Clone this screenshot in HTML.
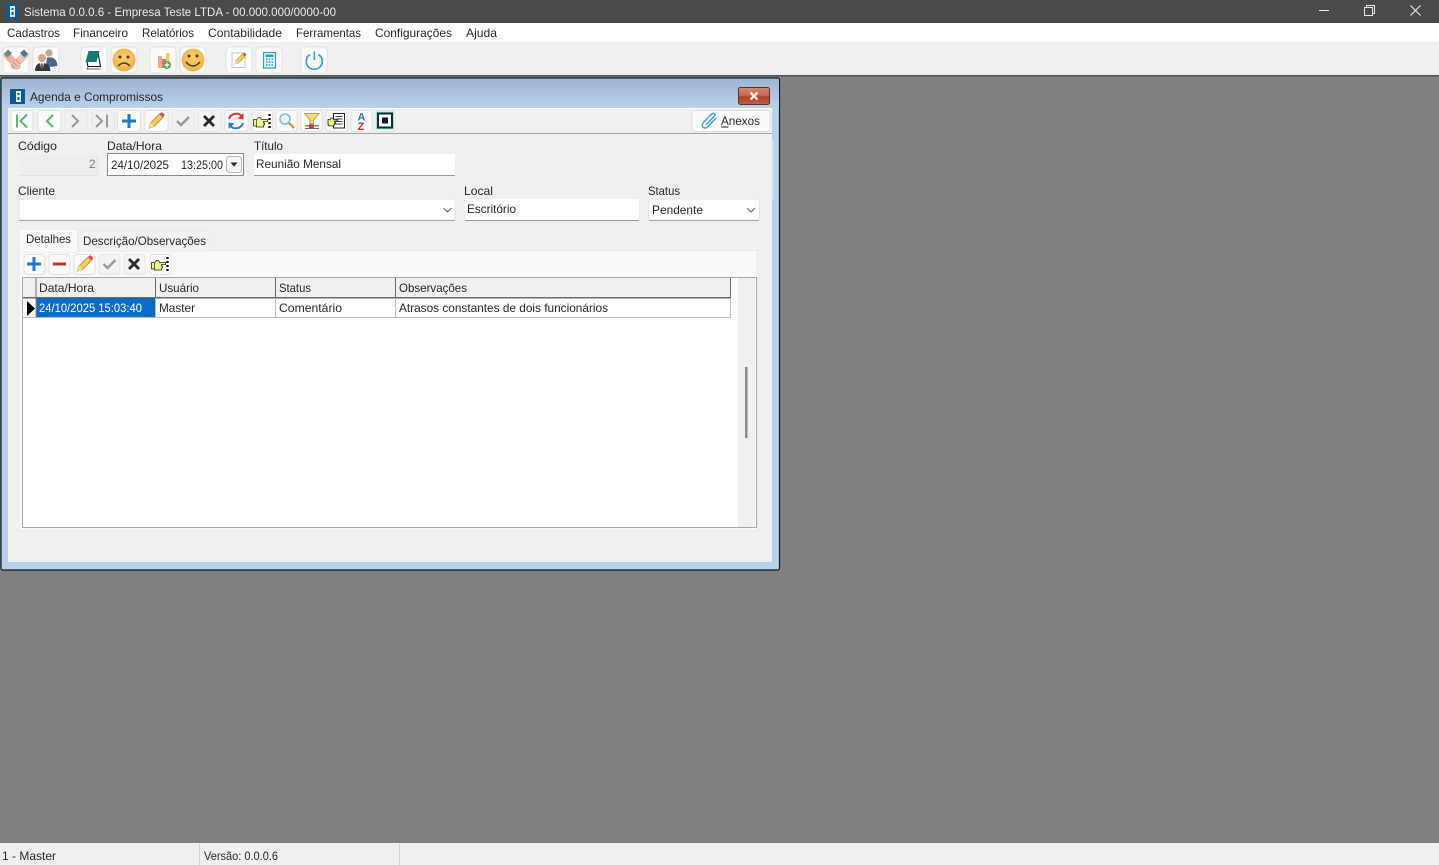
<!DOCTYPE html>
<html lang="pt-BR">
<head>
<meta charset="utf-8">
<title>Sistema 0.0.0.6</title>
<style>
html,body{margin:0;padding:0;width:1439px;height:865px;overflow:hidden;background:#808080}
svg{display:block;position:absolute;left:0;top:0}
text{font-family:"Liberation Sans",sans-serif;font-size:12px;fill:#262626;white-space:pre}
.b{fill:#fbfbfb;stroke:#e0e0e0}
</style>
</head>
<body>
<svg width="1439" height="865" viewBox="0 0 1439 865" xmlns="http://www.w3.org/2000/svg">
<defs>
<linearGradient id="tg" x1="0" y1="0" x2="0" y2="1"><stop offset="0" stop-color="#9db5d1"/><stop offset="1" stop-color="#b9d1ea"/></linearGradient>
<linearGradient id="cg" x1="0" y1="0" x2="0" y2="1"><stop offset="0" stop-color="#d98a78"/><stop offset=".5" stop-color="#c9614c"/><stop offset=".55" stop-color="#b23a22"/><stop offset="1" stop-color="#c4624c"/></linearGradient>
<radialGradient id="sm" cx=".5" cy=".4" r=".6"><stop offset="0" stop-color="#f8cf6c"/><stop offset="1" stop-color="#eeb04a"/></radialGradient>
<g id="pencil">
<path d="M-7 7 L-5.500 2 L3.500 -7 L7 -3.500 L-2 5.500 Z" fill="#f3cb5c" stroke="#b98a30" stroke-width=".8"/>
<path d="M3.500 -7 L5 -8.500 Q6 -9 7 -8 L8.300 -6.800 Q9 -6 8.300 -5 L7 -3.500 Z" fill="#d9534f"/>
<path d="M-7 7 L-5.500 2 L-2 5.500 Z" fill="#f3e0b8"/>
</g>
<path id="plus" d="M-7 0H7M0 -7V7" stroke="#2277cc" stroke-width="3" fill="none"/>
<path id="check" d="M-6 0 L-2 4 L6 -4" stroke="#9a9a9a" stroke-width="2.500" fill="none"/>
<path id="xx" d="M-5 -5 L5 5 M5 -5 L-5 5" stroke="#2a2a2a" stroke-width="2.800" fill="none"/>
<g id="hand">
<path d="M-8.500 -2.500 H-5.500 L-3.500 -4.500 H-1.500 L-.5 -2.500 H5.500 V-.5 H1.500 V1 H2.500 V3 H1.500 V5 H-5.500 V4 H-8.500 Z" fill="#f0f488" stroke="#2a2a2a" stroke-width=".8"/>
<path d="M-5.500 -2V4" stroke="#2a2a2a" stroke-width=".7"/>
<path d="M7.500 -8V-6M7.500 -4V-2M7.500 0V2M7.500 4V6" stroke="#111" stroke-width="2.400"/>
</g>
</defs>

<!-- title bar -->
<rect width="1439" height="23" fill="#4b4a48"/>
<rect x="6" y="3" width="12" height="17" fill="#0e5a8c"/>
<rect x="10" y="6" width="5" height="11" fill="#dfeaf2"/>
<rect x="11.500" y="8" width="2" height="2" fill="#0e5a8c"/><rect x="11.500" y="12" width="2" height="3" fill="#0e5a8c"/>
<text x="24" y="16" textLength="312" lengthAdjust="spacingAndGlyphs" style="fill:#ececec">Sistema 0.0.0.6 - Empresa Teste LTDA - 00.000.000/0000-00</text>
<path d="M1319 10.500H1329" stroke="#eee" stroke-width="1"/>
<path d="M1364.500 7.500h8v8h-8z M1366.500 7.500v-2h8v8h-2" stroke="#eee" fill="none"/>
<path d="M1410.500 5.500 L1420.500 15.500 M1420.500 5.500 L1410.500 15.500" stroke="#eee" stroke-width="1.100"/>

<!-- menu -->
<rect y="23" width="1439" height="20" fill="#fff"/>
<g>
<text x="7" y="37" textLength="53" lengthAdjust="spacingAndGlyphs">Cadastros</text>
<text x="73" y="37" textLength="55" lengthAdjust="spacingAndGlyphs">Financeiro</text>
<text x="142" y="37" textLength="52" lengthAdjust="spacingAndGlyphs">Relatórios</text>
<text x="208" y="37" textLength="74" lengthAdjust="spacingAndGlyphs">Contabilidade</text>
<text x="296" y="37" textLength="65" lengthAdjust="spacingAndGlyphs">Ferramentas</text>
<text x="375" y="37" textLength="77" lengthAdjust="spacingAndGlyphs">Configurações</text>
<text x="466" y="37" textLength="31" lengthAdjust="spacingAndGlyphs">Ajuda</text>
</g>

<!-- main toolbar -->
<rect y="43" width="1439" height="32" fill="#f0f0f0"/>
<rect y="42" width="1439" height="1" fill="#ececec"/>
<rect y="75" width="1439" height="1.500" fill="#4e5458"/>
<g>
<rect class="b" x="3" y="47" width="26" height="26" rx="4"/>
<rect class="b" x="33" y="47" width="26" height="26" rx="4"/>
<rect class="b" x="81" y="47" width="26" height="26" rx="4"/>
<rect class="b" x="111" y="47" width="26" height="26" rx="4"/>
<rect class="b" x="150" y="47" width="26" height="26" rx="4"/>
<rect class="b" x="180" y="47" width="26" height="26" rx="4"/>
<rect class="b" x="226" y="47" width="26" height="26" rx="4"/>
<rect class="b" x="256" y="47" width="26" height="26" rx="4"/>
<rect class="b" x="301" y="47" width="26" height="26" rx="4"/>
</g>
<!-- handshake -->
<path d="M7 55 L17 66" stroke="#e4b3a2" stroke-width="7" stroke-linecap="round"/>
<path d="M25 55 L14 66" stroke="#eec3b2" stroke-width="7" stroke-linecap="round"/>
<path d="M13 62 L17 66M15.500 59.500 L20 64M11 64.500 L15 68" stroke="#c48d7a" fill="none"/>
<path d="M4 54 L8 49.500 L12 53 L7.500 57.500 Z" fill="#77828c"/>
<path d="M28 54 L24 49.500 L20 53 L24.500 57.500 Z" fill="#47779f"/>
<!-- people -->
<circle cx="49" cy="53" r="3.600" fill="#c2a690"/><path d="M46 65 L47 57.500 L52 57.500 Q57 59 57.500 66 L50 67Z" fill="#4e6a86"/>
<circle cx="42" cy="58" r="4" fill="#d6a98c"/><path d="M35 71 Q35 63 42 63 Q50 63 50.500 71 Z" fill="#2d3a48"/><path d="M40 63 h4 l-1 5 h-2z" fill="#e8e8e8"/><path d="M41.300 63.500 h1.400 l.5 4 -1.200 2 -1.200 -2z" fill="#b8342c"/>
<!-- notebook -->
<path d="M98 53 L100.500 66.500 H88 L87 62" fill="#fff" stroke="#111" stroke-width="1.100"/>
<path d="M88.500 51 H99.500 L96.500 62 H85.500 Z" fill="#177a70"/>
<path d="M88.500 66.500 L87 69 H100.500" fill="none" stroke="#333" stroke-width=".7"/>
<!-- sad -->
<circle cx="124" cy="60" r="11.500" fill="url(#sm)"/>
<circle cx="120" cy="57" r="1.500" fill="#4a3a20"/><circle cx="128" cy="57" r="1.500" fill="#4a3a20"/>
<path d="M118 66 Q124 60 130 66" stroke="#4a3a20" stroke-width="1.500" fill="none"/>
<!-- chart + -->
<rect x="158" y="56" width="4" height="12" fill="#f0a97c"/><rect x="162" y="59" width="4" height="9" fill="#e2708a"/><rect x="166" y="53" width="3.500" height="15" fill="#e8d24f"/>
<circle cx="167" cy="65" r="4" fill="#4caf50"/><path d="M164.500 65h5M167 62.500v5" stroke="#fff" stroke-width="1.200"/>
<!-- happy -->
<circle cx="193" cy="60" r="11.500" fill="url(#sm)"/>
<circle cx="189" cy="56" r="1.500" fill="#4a3a20"/><circle cx="197" cy="56" r="1.500" fill="#4a3a20"/>
<path d="M186 62 Q193 70 200 62" stroke="#4a3a20" stroke-width="1.500" fill="none"/>
<!-- note -->
<rect x="232" y="53" width="13" height="14.500" fill="#fff" stroke="#c9c4b8"/>
<g transform="translate(240,59) scale(.72)"><use href="#pencil"/></g>
<!-- calc -->
<rect x="263.500" y="52.500" width="12" height="15.500" fill="#e4f6f8" stroke="#2fa3b5" stroke-width="1.200"/>
<rect x="265.500" y="54.500" width="8" height="2.500" fill="#2fa3b5"/>
<path d="M266 59h1.500M268.800 59h1.500M271.500 59h1.500M266 62h1.500M268.800 62h1.500M271.500 62h1.500M266 65h1.500M268.800 65h1.500M271.500 65h1.500" stroke="#2fa3b5" stroke-width="1.500"/>
<!-- power -->
<path d="M310 54.500 A8 8 0 1 0 318.500 54.500" stroke="#35a2c4" stroke-width="1.700" fill="none"/>
<path d="M314.300 51.500V60" stroke="#35a2c4" stroke-width="1.700"/>

<!-- MDI window -->
<rect x="1" y="78" width="778.500" height="492" fill="#b9d1ea" stroke="#0b1a22" stroke-width="1.200" rx="2"/>
<rect x="2" y="79" width="777" height="29" fill="url(#tg)"/>
<rect x="8" y="108" width="764" height="454" fill="#f0f0f0"/>
<rect x="8" y="108" width="764" height="1" fill="#fdfdfd"/>
<rect x="8" y="133" width="764" height="1" fill="#a3a3a3"/>
<rect x="772" y="140" width="2" height="60" fill="#cfdeef"/>
<!-- window title -->
<rect x="10" y="89" width="15" height="15" fill="#0e5a8c"/>
<rect x="16" y="91" width="5" height="11" fill="#e8f0f5"/>
<rect x="17.500" y="93" width="2" height="2" fill="#0e5a8c"/><rect x="17.500" y="97" width="2" height="3" fill="#0e5a8c"/>
<text x="30" y="101" textLength="133" lengthAdjust="spacingAndGlyphs">Agenda e Compromissos</text>
<rect x="738.500" y="87.500" width="31" height="17" rx="2" fill="url(#cg)" stroke="#5d3028"/>
<path d="M750.500 92.500 L757.500 99.500 M757.500 92.500 L750.500 99.500" stroke="#f4e8e4" stroke-width="2.400"/>

<!-- window toolbar buttons -->
<g>
<rect class="b" x="11" y="110.500" width="22" height="21" rx="3" style="stroke:#cfe8cf"/>
<rect class="b" x="38" y="110.500" width="23" height="21" rx="3" style="stroke:#cfe8cf"/>
<rect class="b" x="65" y="110.500" width="22" height="21" rx="3" style="fill:#f0f0f0;stroke:#e6e6e6"/>
<rect class="b" x="92" y="110.500" width="22" height="21" rx="3" style="fill:#f0f0f0;stroke:#e6e6e6"/>
<rect class="b" x="117.500" y="110.500" width="23" height="21" rx="3"/>
<rect class="b" x="145" y="110.500" width="23" height="21" rx="3"/>
<rect class="b" x="172" y="110.500" width="22" height="21" rx="3" style="fill:#f0f0f0;stroke:#e6e6e6"/>
<rect class="b" x="198" y="110.500" width="23" height="21" rx="3" style="fill:#f3f3f3;stroke:#e6e6e6"/>
<rect class="b" x="225" y="110.500" width="23" height="21" rx="3"/>
<rect class="b" x="252" y="110.500" width="20.500" height="21" rx="3"/>
<rect class="b" x="276" y="110.500" width="21" height="21" rx="3"/>
<rect class="b" x="301" y="110.500" width="21" height="21" rx="3"/>
<rect class="b" x="326" y="110.500" width="21" height="21" rx="3"/>
<rect class="b" x="351" y="110.500" width="21" height="21" rx="3"/>
<rect class="b" x="375" y="110.500" width="20" height="21" rx="3"/>
</g>
<path d="M17 114.500V127.500M27 114.500 L20.500 121 L27 127.500" stroke="#59b869" stroke-width="2" fill="none"/>
<path d="M53 115 L47 121 L53 127" stroke="#59b869" stroke-width="2" fill="none"/>
<path d="M72 115 L78 121 L72 127" stroke="#999" stroke-width="2" fill="none"/>
<path d="M96 115 L102 121 L96 127M107 114.500V127.500" stroke="#999" stroke-width="2" fill="none"/>
<use href="#plus" x="129" y="121"/>
<use href="#pencil" x="156" y="121"/>
<use href="#check" x="183" y="121"/>
<use href="#xx" x="209" y="121"/>
<!-- refresh -->
<path d="M229 119 A7.500 7.500 0 0 1 242 116.500" stroke="#d8392f" stroke-width="2" fill="none"/><path d="M243.500 113 L243.500 119.500 L237.500 118.500Z" fill="#d8392f"/>
<path d="M243 123 A7.500 7.500 0 0 1 230 125.500" stroke="#2b78cf" stroke-width="2" fill="none"/><path d="M228.500 129 L228.500 122.500 L234.500 123.500Z" fill="#2b78cf"/>
<use href="#hand" x="262" y="122"/>
<!-- magnifier -->
<circle cx="285" cy="119" r="5" fill="#e6f3fb" stroke="#7fb6dc" stroke-width="1.500"/>
<path d="M289 123 L294 128" stroke="#c99a3c" stroke-width="2.400"/>
<!-- filter -->
<path d="M304.500 113.500 H319 L313.500 120 V124 H310 V120 Z" fill="#f5d98a" stroke="#c9a040"/>
<rect x="305" y="125" width="14" height="1.500" fill="#888"/><rect x="309" y="124.500" width="5" height="4" fill="#c8443c"/><rect x="305" y="128" width="14" height="1" fill="#666"/>
<!-- hand doc -->
<rect x="333.500" y="113.500" width="11" height="14.500" fill="#fff" stroke="#222"/>
<path d="M335.500 116.500h7M335.500 119h7M335.500 121.500h7M335.500 124h7" stroke="#444"/>
<path d="M328 119.500h2l1.500-1.500h1.500l.5 1.500h4v1.500h-3v1h1v1.500h-1v1.500h-1v1h-4.500v-1h-1z" fill="#f0f488" stroke="#222" stroke-width=".8"/>
<!-- AZ -->
<text x="357.500" y="120.500" style="font-size:11px;font-weight:bold;fill:#2b78cf">A</text>
<text x="357.500" y="130" style="font-size:11px;font-weight:bold;fill:#b8302a">Z</text>
<!-- square -->
<rect x="378" y="113.500" width="14" height="14" fill="#fff" stroke="#0d2d2d" stroke-width="2"/>
<rect x="376.500" y="112" width="17" height="17" fill="none" stroke="#9fe0dc" stroke-width="1"/>
<rect x="382" y="117.500" width="6" height="6" fill="#0d1f24"/>

<!-- anexos -->
<rect x="692" y="110.500" width="78" height="21" rx="3" fill="#fcfcfc" stroke="#dcdcdc"/>
<path d="M706 125 L714 116.500 Q716 114 714 113.500 Q712.500 113 710.500 115 L703.500 122.500 Q701 126 703.500 127.500 Q706 129 708.500 126 L716 118" stroke="#3ba8cc" stroke-width="1.500" fill="none"/>
<text x="721" y="125" textLength="39" lengthAdjust="spacingAndGlyphs">Anexos</text>
<rect x="721" y="126.500" width="7.500" height="1" fill="#1c1c1c"/>

<!-- form labels -->
<text x="18" y="150" textLength="39" lengthAdjust="spacingAndGlyphs">Código</text>
<text x="107" y="150" textLength="55" lengthAdjust="spacingAndGlyphs">Data/Hora</text>
<text x="254" y="150" textLength="29" lengthAdjust="spacingAndGlyphs">Título</text>
<text x="18" y="195" textLength="37" lengthAdjust="spacingAndGlyphs">Cliente</text>
<text x="464" y="195" textLength="29" lengthAdjust="spacingAndGlyphs">Local</text>
<text x="648" y="195" textLength="32" lengthAdjust="spacingAndGlyphs">Status</text>

<!-- fields -->
<rect x="19" y="155" width="78" height="20" fill="#eeeeee"/>
<path d="M97.500 155V175" stroke="#e2e2e2"/><path d="M19 175.500H97" stroke="#e2e2e2"/>
<text x="89" y="168" style="fill:#777">2</text>
<rect x="107.500" y="153.500" width="136" height="22" fill="#fff" stroke="#8a8a8a"/>
<text x="111" y="169" textLength="58" lengthAdjust="spacingAndGlyphs">24/10/2025</text>
<text x="181" y="169" textLength="42" lengthAdjust="spacingAndGlyphs">13:25:00</text>
<rect x="226.500" y="156.500" width="15" height="16" rx="3" fill="#f6f6f6" stroke="#b5b5b5"/>
<path d="M230.500 162.500H237.500L234 166.500Z" fill="#222"/>
<rect x="254" y="154" width="201" height="21" fill="#fff"/><path d="M254 175.500H455" stroke="#9a9a9a"/>
<text x="256" y="168" textLength="85" lengthAdjust="spacingAndGlyphs">Reunião Mensal</text>

<rect x="19" y="199" width="436" height="21" rx="2" fill="#fff" stroke="#e0e0e0" stroke-width=".8"/><path d="M19 220.500H455" stroke="#a8a8a8"/>
<path d="M443.500 208 L447.500 212 L451.500 208" stroke="#666" fill="none"/>
<rect x="465" y="199" width="174" height="21" fill="#fff"/><path d="M465 220.500H639" stroke="#9a9a9a"/>
<text x="467" y="213" textLength="49" lengthAdjust="spacingAndGlyphs">Escritório</text>
<rect x="648.500" y="199" width="111" height="21" rx="2" fill="#fff" stroke="#e0e0e0" stroke-width=".8"/><path d="M649 220.500H759" stroke="#a8a8a8"/>
<text x="652" y="214" textLength="51" lengthAdjust="spacingAndGlyphs">Pendente</text>
<path d="M747 208 L751 212 L755 208" stroke="#666" fill="none"/>

<!-- tabs -->
<rect x="19" y="250.500" width="738" height="280" fill="#f9f9f9" stroke="#e8e8e8"/>
<rect x="78.500" y="231" width="131" height="20" fill="#f2f2f2" stroke="#e9e9e9"/>
<rect x="19" y="229" width="59" height="23" fill="#f9f9f9" stroke="#e8e8e8"/>
<rect x="20" y="248" width="57.500" height="4" fill="#f9f9f9"/>
<text x="26" y="243" textLength="45" lengthAdjust="spacingAndGlyphs">Detalhes</text>
<text x="83" y="245" textLength="123" lengthAdjust="spacingAndGlyphs">Descrição/Observações</text>

<!-- sub toolbar -->
<g>
<rect class="b" x="24" y="254.500" width="21" height="20" rx="3"/>
<rect class="b" x="49" y="254.500" width="21" height="20" rx="3"/>
<rect class="b" x="74" y="254.500" width="21" height="20" rx="3"/>
<rect class="b" x="99" y="254.500" width="21" height="20" rx="3" style="fill:#f3f3f3;stroke:#e6e6e6"/>
<rect class="b" x="124" y="254.500" width="21" height="20" rx="3" style="fill:#f3f3f3;stroke:#e6e6e6"/>
<rect class="b" x="150" y="254.500" width="21" height="20" rx="3"/>
</g>
<use href="#plus" x="34" y="264"/>
<path d="M53 264H66" stroke="#c9302c" stroke-width="3"/>
<use href="#pencil" x="84.500" y="264"/>
<use href="#check" x="109.500" y="264"/>
<use href="#xx" x="134" y="264"/>
<use href="#hand" x="160" y="265"/>

<!-- grid -->
<rect x="22.500" y="277.500" width="734" height="250" fill="#fff" stroke="#a8a8a8"/>
<rect x="23" y="278" width="708" height="19" fill="#f0f0f0"/>
<rect x="23" y="297" width="708" height="1.500" fill="#6a6a6a"/>
<path d="M36 278V297M155.500 278V297M275.500 278V297M395.500 278V297M730.500 278V297" stroke="#6a6a6a"/>
<path d="M155.500 298V318M275.500 298V318M395.500 298V318M730.500 298V318" stroke="#c0c0c0"/>
<path d="M23 317.500H731" stroke="#c0c0c0"/>
<rect x="36" y="298" width="119" height="19" fill="#0a6cc8"/>
<path d="M27 301V316L35 308.500Z" fill="#000"/>
<path d="M36 298V318" stroke="#8a8a8a"/>
<text x="39" y="292" textLength="55" lengthAdjust="spacingAndGlyphs">Data/Hora</text>
<text x="159" y="292" textLength="40" lengthAdjust="spacingAndGlyphs">Usuário</text>
<text x="279" y="292" textLength="32" lengthAdjust="spacingAndGlyphs">Status</text>
<text x="399" y="292" textLength="68" lengthAdjust="spacingAndGlyphs">Observações</text>
<text x="39" y="312" textLength="103" lengthAdjust="spacingAndGlyphs" style="fill:#fff">24/10/2025 15:03:40</text>
<text x="159" y="312" textLength="36" lengthAdjust="spacingAndGlyphs">Master</text>
<text x="279" y="312" textLength="63" lengthAdjust="spacingAndGlyphs">Comentário</text>
<text x="399" y="312" textLength="209" lengthAdjust="spacingAndGlyphs">Atrasos constantes de dois funcionários</text>
<rect x="738" y="278" width="17" height="249" fill="#f0f0f0"/>
<rect x="745" y="367" width="2.500" height="71" fill="#8a8a8a"/>

<!-- status bar -->
<rect y="843" width="1439" height="22" fill="#f0f0f0"/>
<path d="M199.500 844V865M399.500 844V865" stroke="#d4d4d4"/>
<text x="2" y="860" textLength="54" lengthAdjust="spacingAndGlyphs">1 - Master</text>
<text x="204" y="860" textLength="74" lengthAdjust="spacingAndGlyphs">Versão: 0.0.0.6</text>
</svg>
</body>
</html>
